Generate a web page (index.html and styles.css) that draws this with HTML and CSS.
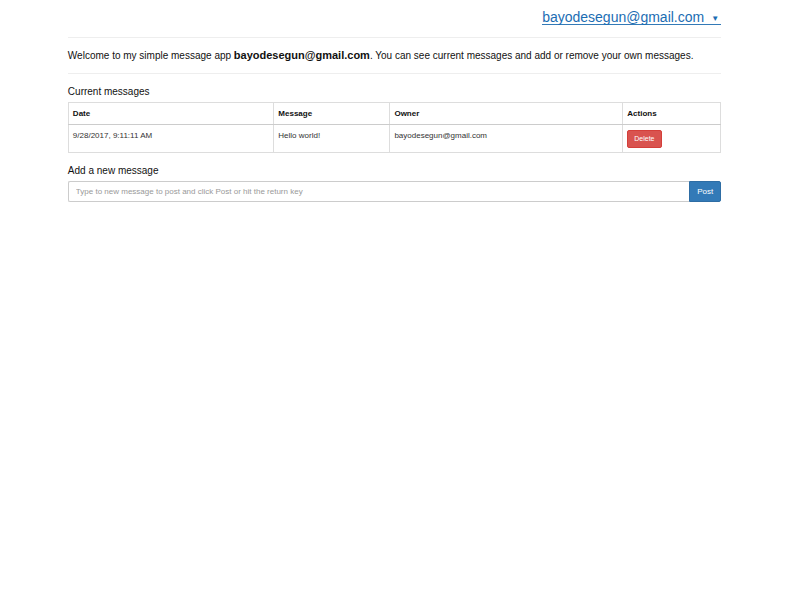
FILE: index.html
```html
<!DOCTYPE html>
<html lang="en">
<head>
<meta charset="utf-8">
<title>Messages</title>
<link rel="stylesheet" href="styles.css">
</head>
<body>
<div class="container">
  <header class="topbar">
    <a class="account" href="#">bayodesegun@gmail.com<span class="caret">▼</span></a>
  </header>
  <p class="welcome">Welcome to my simple message app <strong>bayodesegun@gmail.com</strong>. You can see current messages and add or remove your own messages.</p>
  <h2 class="heading">Current messages</h2>
  <table class="messages">
    <thead>
      <tr><th class="col-date">Date</th><th class="col-message">Message</th><th class="col-owner">Owner</th><th>Actions</th></tr>
    </thead>
    <tbody>
      <tr><td>9/28/2017, 9:11:11 AM</td><td>Hello world!</td><td>bayodesegun@gmail.com</td><td><button class="delete" type="button">Delete</button></td></tr>
    </tbody>
  </table>
  <form class="composer">
    <label class="heading" for="message">Add a new message</label>
    <div class="input-group">
      <input id="message" class="field" type="text" placeholder="Type to new message to post and click Post or hit the return key">
      <button class="post" type="button">Post</button>
    </div>
  </form>
</div>
</body>
</html>
```
FILE: styles.css
```css
* { box-sizing: border-box; }
body {
  margin: 0;
  padding: 0 11px 0 0;
  background: #fff;
  color: #333;
  font: 8px/12px "Liberation Sans", Arial, sans-serif;
}
.container { width: 82.8%; margin: 0 auto; }
.topbar {
  display: flex;
  justify-content: flex-end;
  height: 38px;
  padding-top: 10px;
  border-bottom: 1px solid #eee;
}
.account {
  align-self: flex-start;
  border-bottom: 1px solid #337ab7;
  color: #1b6db3;
  font-size: 14px;
  line-height: 14px;
  text-decoration: none;
}
.caret {
  display: inline-block;
  padding: 0 2px 0 7px;
  font-size: 8px;
  vertical-align: 1px;
  line-height: 10px;
}
.welcome {
  margin: 0;
  padding: 11px 0;
  border-bottom: 1px solid #eee;
  color: #111;
  font-size: 10px;
}
.welcome strong { font-size: 11px; }
.heading {
  display: block;
  margin: 12px 0 5px;
  color: #111;
  font-size: 10px;
  font-weight: 400;
  line-height: 11px;
}
.messages {
  width: 100%;
  border-collapse: collapse;
  table-layout: fixed;
}
.messages th, .messages td {
  border: 1px solid #ddd;
  padding: 5px 4px 4px;
  text-align: left;
  vertical-align: top;
}
.messages th { color: #111; }
.messages thead th { border-bottom-color: #ccc; }
.col-date { width: 31.5%; }
.col-message { width: 17.8%; }
.col-owner { width: 35.7%; }
.delete {
  display: block;
  border: 1px solid #d43f3a;
  border-radius: 2px;
  padding: 2px 6px;
  background: #d9534f;
  color: #fff;
  font: 7px/12px "Liberation Sans", Arial, sans-serif;
}
.input-group { display: flex; height: 21px; }
.field {
  flex: 1;
  min-width: 0;
  border: 1px solid #ccc;
  border-right: 0;
  border-radius: 2px 0 0 2px;
  padding: 0 7px;
  color: #555;
  font: 8px "Liberation Sans", Arial, sans-serif;
}
.field::placeholder { color: #999; }
.post {
  border: 1px solid #2e6da4;
  border-radius: 0 2px 2px 0;
  padding: 0 7px;
  background: #337ab7;
  color: #fff;
  font: 8px "Liberation Sans", Arial, sans-serif;
}
```
